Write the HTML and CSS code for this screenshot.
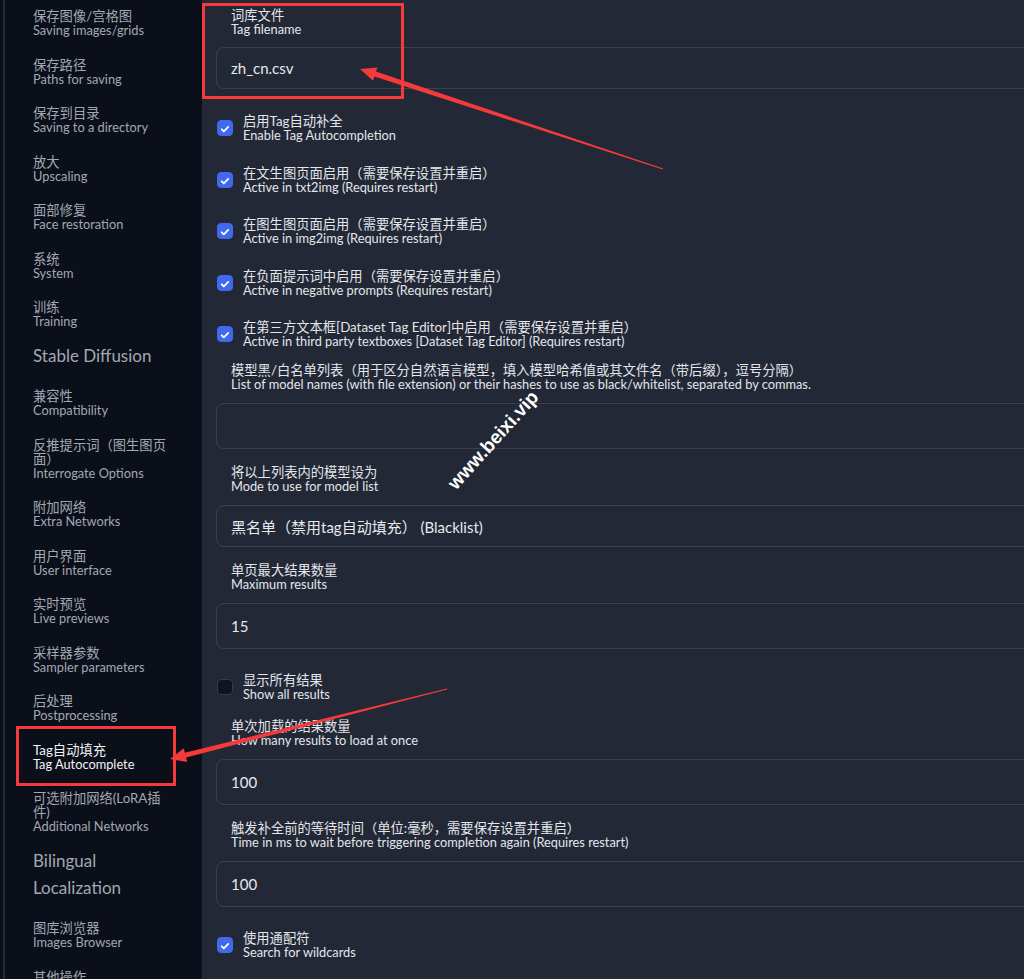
FILE: index.html
```html
<!DOCTYPE html>
<html lang="zh-CN">
<head>
    <meta charset="UTF-8">
    <title>Settings - Tag Autocomplete</title>
    <link rel="stylesheet" href="styles.css">
</head>
<body>
    <div class="app">
        <div class="sidebar">
            <div class="nav">
                <div class="item"><div class="zh">保存图像/宫格图</div><div class="en">Saving images/grids</div></div>
                <div class="item"><div class="zh">保存路径</div><div class="en">Paths for saving</div></div>
                <div class="item"><div class="zh">保存到目录</div><div class="en">Saving to a directory</div></div>
                <div class="item"><div class="zh">放大</div><div class="en">Upscaling</div></div>
                <div class="item"><div class="zh">面部修复</div><div class="en">Face restoration</div></div>
                <div class="item"><div class="zh">系统</div><div class="en">System</div></div>
                <div class="item"><div class="zh">训练</div><div class="en">Training</div></div>
                <div class="item heading">Stable Diffusion</div>
                <div class="item"><div class="zh">兼容性</div><div class="en">Compatibility</div></div>
                <div class="item"><div class="zh">反推提示词（图生图页面）</div><div class="en">Interrogate Options</div></div>
                <div class="item"><div class="zh">附加网络</div><div class="en">Extra Networks</div></div>
                <div class="item"><div class="zh">用户界面</div><div class="en">User interface</div></div>
                <div class="item"><div class="zh">实时预览</div><div class="en">Live previews</div></div>
                <div class="item"><div class="zh">采样器参数</div><div class="en">Sampler parameters</div></div>
                <div class="item"><div class="zh">后处理</div><div class="en">Postprocessing</div></div>
                <div class="item active"><div class="zh">Tag自动填充</div><div class="en">Tag Autocomplete</div></div>
                <div class="item"><div class="zh">可选附加网络(LoRA插件)</div><div class="en">Additional Networks</div></div>
                <div class="item heading">Bilingual Localization</div>
                <div class="item"><div class="zh">图库浏览器</div><div class="en">Images Browser</div></div>
                <div class="item"><div class="zh">其他操作</div><div class="en">Actions</div></div>
            </div>
        </div>

        <div class="main">
            <div class="field first">
                <div class="label"><div class="zh">词库文件</div><div class="en">Tag filename</div></div>
                <div class="input short">zh_cn.csv</div>
            </div>

            <div class="check on">
                <span class="box"><svg viewBox="0 0 16 16" width="16" height="16"><path d="M4.2 8.3l2.5 2.5 5-5.3" fill="none" stroke="#fff" stroke-width="2" stroke-linecap="round" stroke-linejoin="round"/></svg></span>
                <div class="label"><div class="zh">启用Tag自动补全</div><div class="en">Enable Tag Autocompletion</div></div>
            </div>
            <div class="check on">
                <span class="box"><svg viewBox="0 0 16 16" width="16" height="16"><path d="M4.2 8.3l2.5 2.5 5-5.3" fill="none" stroke="#fff" stroke-width="2" stroke-linecap="round" stroke-linejoin="round"/></svg></span>
                <div class="label"><div class="zh">在文生图页面启用（需要保存设置并重启）</div><div class="en">Active in txt2img (Requires restart)</div></div>
            </div>
            <div class="check on">
                <span class="box"><svg viewBox="0 0 16 16" width="16" height="16"><path d="M4.2 8.3l2.5 2.5 5-5.3" fill="none" stroke="#fff" stroke-width="2" stroke-linecap="round" stroke-linejoin="round"/></svg></span>
                <div class="label"><div class="zh">在图生图页面启用（需要保存设置并重启）</div><div class="en">Active in img2img (Requires restart)</div></div>
            </div>
            <div class="check on">
                <span class="box"><svg viewBox="0 0 16 16" width="16" height="16"><path d="M4.2 8.3l2.5 2.5 5-5.3" fill="none" stroke="#fff" stroke-width="2" stroke-linecap="round" stroke-linejoin="round"/></svg></span>
                <div class="label"><div class="zh">在负面提示词中启用（需要保存设置并重启）</div><div class="en">Active in negative prompts (Requires restart)</div></div>
            </div>
            <div class="check on">
                <span class="box"><svg viewBox="0 0 16 16" width="16" height="16"><path d="M4.2 8.3l2.5 2.5 5-5.3" fill="none" stroke="#fff" stroke-width="2" stroke-linecap="round" stroke-linejoin="round"/></svg></span>
                <div class="label"><div class="zh">在第三方文本框[Dataset Tag Editor]中启用（需要保存设置并重启）</div><div class="en">Active in third party textboxes [Dataset Tag Editor] (Requires restart)</div></div>
            </div>

            <div class="field">
                <div class="label"><div class="zh">模型黑/白名单列表（用于区分自然语言模型，填入模型哈希值或其文件名（带后缀），逗号分隔）</div><div class="en">List of model names (with file extension) or their hashes to use as black/whitelist, separated by commas.</div></div>
                <div class="input"></div>
            </div>
            <div class="field">
                <div class="label"><div class="zh">将以上列表内的模型设为</div><div class="en">Mode to use for model list</div></div>
                <div class="input short">黑名单（禁用tag自动填充） (Blacklist)</div>
            </div>
            <div class="field">
                <div class="label"><div class="zh">单页最大结果数量</div><div class="en">Maximum results</div></div>
                <div class="input">15</div>
            </div>

            <div class="check">
                <span class="box"></span>
                <div class="label"><div class="zh">显示所有结果</div><div class="en">Show all results</div></div>
            </div>

            <div class="field wide">
                <div class="label"><div class="zh">单次加载的结果数量</div><div class="en">How many results to load at once</div></div>
                <div class="input">100</div>
            </div>
            <div class="field">
                <div class="label"><div class="zh">触发补全前的等待时间（单位:毫秒，需要保存设置并重启）</div><div class="en">Time in ms to wait before triggering completion again (Requires restart)</div></div>
                <div class="input">100</div>
            </div>

            <div class="check on">
                <span class="box"><svg viewBox="0 0 16 16" width="16" height="16"><path d="M4.2 8.3l2.5 2.5 5-5.3" fill="none" stroke="#fff" stroke-width="2" stroke-linecap="round" stroke-linejoin="round"/></svg></span>
                <div class="label"><div class="zh">使用通配符</div><div class="en">Search for wildcards</div></div>
            </div>
        </div>
    </div>

    <!-- annotations drawn over the screenshot -->
    <svg class="marks" width="1024" height="979" viewBox="0 0 1024 979">
        <rect x="203.5" y="4.5" width="199" height="93" fill="none" stroke="#f43a3a" stroke-width="3"/>
        <rect x="17.5" y="727.5" width="157" height="57" fill="none" stroke="#f43a3a" stroke-width="3"/>
        <polygon fill="#f43a3a" points="360,69 377.4,67.4 376,71.6 663.2,168.5 662.8,169.5 374.4,76.4 373,80.7"/>
        <polygon fill="#f43a3a" points="170,759 183.8,748.3 184.9,752.7 446.9,688.5 447.1,689.5 186.1,757.5 187.2,761.9"/>
        <text class="wm" x="493" y="440" text-anchor="middle" dominant-baseline="central" transform="rotate(-48 493 440)">www.beixi.vip</text>
    </svg>
</body>
</html>
```

FILE: styles.css
```css
body {
    margin: 0;
    width: 1024px;
    height: 979px;
    overflow: hidden;
    position: relative;
    background-color: #0b0f19;
    font-family: Lato, "Noto Sans CJK SC", sans-serif;
}

.app {
    display: flex;
    height: 979px;
}

/* left settings menu */
.sidebar {
    width: 199px;
    flex-shrink: 0;
    padding-left: 3px;
    background-color: #0b0f19;
}

.nav {
    height: 100%;
    box-sizing: border-box;
    border-left: 2px solid #232937;
    padding: 9px 33px 0 28px;
    color: #a2a8b3;
}

.item {
    margin-bottom: 20.5px;
}

.item .zh {
    font-size: 13.3px;
    line-height: 14px;
}

.item .en {
    font-size: 12.8px;
    line-height: 14px;
}

.item.heading {
    font-size: 17px;
    line-height: 27px;
    margin-top: -7px;
}

.item.active {
    color: #f2f3f5;
}

/* settings panel */
.main {
    flex: 1;
    background-color: #222836;
    padding: 8px 0 0 14px;
    color: #e4e6ea;
    overflow: hidden;
}

.label .zh {
    font-size: 13.3px;
    line-height: 14px;
}

.label .en {
    font-size: 12.8px;
    line-height: 14px;
}

.field {
    margin-top: 16px;
}

.field.first {
    margin-top: 0;
}

.check + .field {
    margin-top: 15px;
}

.check + .field.wide {
    margin-top: 18px;
}

.field > .label {
    padding-left: 15px;
    margin-bottom: 12px;
}

.field.first > .label {
    margin-bottom: 11px;
}

.input {
    width: 840px;
    height: 46px;
    box-sizing: border-box;
    border: 1px solid #3a404d;
    border-radius: 8px;
    padding: 0 14px;
    display: flex;
    align-items: center;
    font-size: 15px;
    color: #e8e9ec;
}

.input.short {
    height: 42px;
}

.check {
    display: flex;
    align-items: center;
    gap: 10px;
    padding-left: 1px;
    margin-top: 23.5px;
}

.field + .check {
    margin-top: 24px;
}

.field.first + .check {
    margin-top: 25px;
}

.box {
    width: 16px;
    height: 16px;
    box-sizing: border-box;
    border-radius: 4px;
    border: 1px solid #343b4a;
    background-color: #0f1420;
    display: flex;
}

.check.on .box {
    border-color: #4069ee;
    background-color: #4069ee;
}

/* annotation layer */
.marks {
    position: absolute;
    top: 0;
    left: 0;
    pointer-events: none;
}

.wm {
    fill: #ffffff;
    font-family: "Liberation Sans", sans-serif;
    font-weight: bold;
    font-size: 19px;
}
```
